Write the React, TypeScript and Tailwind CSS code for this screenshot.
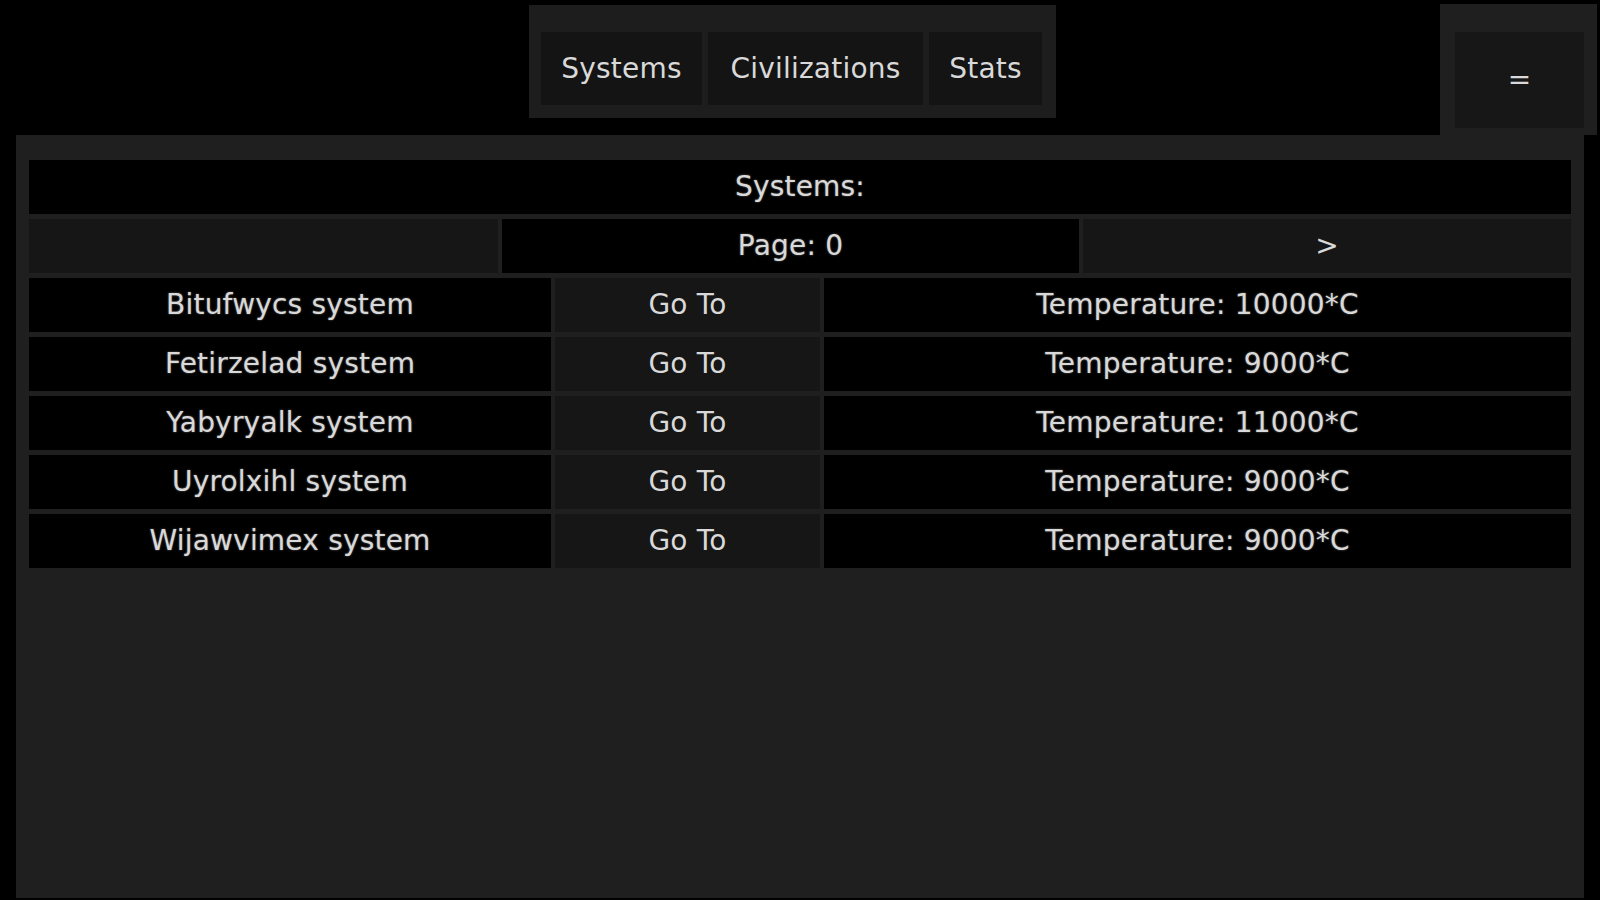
import React from "react";

const systems = [
  { name: "Bitufwycs system", temp: "10000" },
  { name: "Fetirzelad system", temp: "9000" },
  { name: "Yabyryalk system", temp: "11000" },
  { name: "Uyrolxihl system", temp: "9000" },
  { name: "Wijawvimex system", temp: "9000" },
];

const txt = "text-[#d9d9d9] [text-shadow:0_0_2px_rgba(220,220,220,0.5)]";

export default function App() {
  return (
    <div className={`w-[1600px] h-[900px] bg-black overflow-hidden font-['DejaVu_Sans',sans-serif] text-[28px] tracking-[0.2px] ${txt}`}>
      {/* Top bar */}
      <div className="flex h-[135px]">
        <div className="ml-[529px] mt-[5px] h-[113px] w-[527px] bg-[#1d1d1d] pt-[27px] px-[12px] pb-[13px] flex gap-[6px]">
          <button className="w-[161px] h-full bg-[#141414] flex items-center justify-center">Systems</button>
          <button className="w-[215px] h-full bg-[#141414] flex items-center justify-center">Civilizations</button>
          <button className="w-[113px] h-full bg-[#141414] flex items-center justify-center">Stats</button>
        </div>
        <div className="ml-auto mr-[3px] mt-[4px] w-[157px] bg-[#1f1f1f] pt-[28px] pl-[15px] pr-[13px] pb-[7px]">
          <button className="w-full h-[96px] bg-[#171717] flex items-center justify-center">=</button>
        </div>
      </div>

      {/* Main panel */}
      <div className="ml-[16px] w-[1568px] h-[763px] bg-[#1f1f1f] pt-[25px] px-[13px] flex flex-col gap-[5px]">
        <div className="h-[54px] bg-black flex items-center justify-center">Systems:</div>
        <div className="h-[54px] flex gap-[4px]">
          <div className="w-[469px] bg-[#161616]" />
          <div className="w-[577px] bg-black flex items-center justify-center">Page: 0</div>
          <button className="flex-1 bg-[#161616] flex items-center justify-center">&gt;</button>
        </div>
        {systems.map((s) => (
          <div key={s.name} className="h-[54px] flex gap-[4px]">
            <div className="w-[522px] bg-black flex items-center justify-center">{s.name}</div>
            <button className="w-[265px] bg-[#161616] flex items-center justify-center">Go To</button>
            <div className="flex-1 bg-black flex items-center justify-center">Temperature: {s.temp}*C</div>
          </div>
        ))}
      </div>
    </div>
  );
}
